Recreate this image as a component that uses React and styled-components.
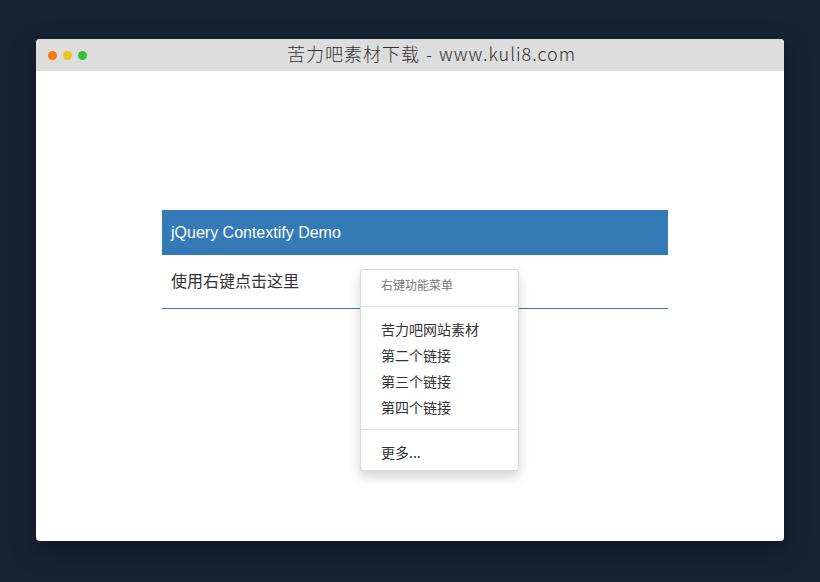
import React from "react";
import styled, { createGlobalStyle } from "styled-components";

const GlobalStyle = createGlobalStyle`
  html, body {
    margin: 0;
    padding: 0;
    background-color: #172333;
  }
  * {
    box-sizing: border-box;
  }
`;

const Page = styled.div`
  width: 820px;
  height: 582px;
  padding: 39px 0 0 36px;
  display: flex;
  align-items: flex-start;
  background-color: #172333;
`;

// Fenetre
const Window = styled.div`
  width: 748px;
  height: 502px;
  background-color: #fff;
  border-radius: 4px;
  overflow: hidden;
  box-shadow: 0 8px 24px rgba(0, 0, 0, 0.35);
  display: flex;
  flex-direction: column;
`;

const TitleBar = styled.header`
  height: 32px;
  background-color: #dddddd;
  display: flex;
  align-items: center;
  padding: 0 8px 0 12px;
`;

const Dots = styled.div`
  display: flex;
  gap: 6px;
  padding-top: 1px;
`;

const Dot = styled.span`
  width: 9px;
  height: 9px;
  border-radius: 50%;
  background-color: ${(p) => p.color};
`;

const Title = styled.div`
  flex: 1;
  text-align: center;
  font-family: "Noto Sans CJK SC", "Liberation Sans", sans-serif;
  font-weight: 300;
  font-size: 18px;
  line-height: 20px;
  padding-bottom: 4px;
  color: #333;
  letter-spacing: 1px;
  word-spacing: 1px;
`;

const Content = styled.main`
  flex: 1;
  padding: 139px 0 0 126px;
  font-family: "Liberation Sans", "Noto Sans CJK SC", sans-serif;
`;

// Panel
const Panel = styled.section`
  position: relative;
  width: 506px;
  border-bottom: 1px solid #337ab7;
`;

const PanelHeading = styled.div`
  height: 45px;
  padding: 0 9px;
  display: flex;
  align-items: center;
  background-color: #337ab7;
  color: #fff;
  font-size: 16px;
`;

const PanelBody = styled.div`
  height: 53px;
  padding: 0 9px 4px;
  display: flex;
  align-items: center;
  font-family: "Noto Sans CJK SC", "Liberation Sans", sans-serif;
  font-size: 16px;
  color: #333;
`;

// Menu contextuel
const Menu = styled.ul`
  position: absolute;
  left: 198px;
  top: 59px;
  width: 159px;
  margin: 0;
  padding: 5px 0;
  list-style: none;
  background-color: #fff;
  border: 1px solid rgba(0, 0, 0, 0.15);
  border-radius: 4px;
  box-shadow: 0 6px 12px rgba(0, 0, 0, 0.175);
  font-family: "Noto Sans CJK SC", "Liberation Sans", sans-serif;
`;

const MenuHeader = styled.li`
  padding: 1px 20px 4px;
  font-size: 12px;
  line-height: 17px;
  color: #777;
`;

const Divider = styled.li`
  height: 1px;
  margin: 9px 0;
  background-color: #e5e5e5;
`;

const MenuItem = styled.li`
  padding: 3px 20px;
  font-size: 14px;
  line-height: 20px;
  color: #333;
  white-space: nowrap;
`;

const links = ["苦力吧网站素材", "第二个链接", "第三个链接", "第四个链接"];

const App = () => {
  return (
    <>
      <GlobalStyle />
      <Page>
        <Window>
          <TitleBar>
            <Dots>
              <Dot color="#f57c0a" />
              <Dot color="#efc31a" />
              <Dot color="#34c140" />
            </Dots>
            <Title>苦力吧素材下载 - www.kuli8.com</Title>
          </TitleBar>
          <Content>
            <Panel>
              <PanelHeading>jQuery Contextify Demo</PanelHeading>
              <PanelBody>使用右键点击这里</PanelBody>
              <Menu>
                <MenuHeader>右键功能菜单</MenuHeader>
                <Divider />
                {links.map((l) => (
                  <MenuItem key={l}>{l}</MenuItem>
                ))}
                <Divider />
                <MenuItem>更多...</MenuItem>
              </Menu>
            </Panel>
          </Content>
        </Window>
      </Page>
    </>
  );
};

export default App;
